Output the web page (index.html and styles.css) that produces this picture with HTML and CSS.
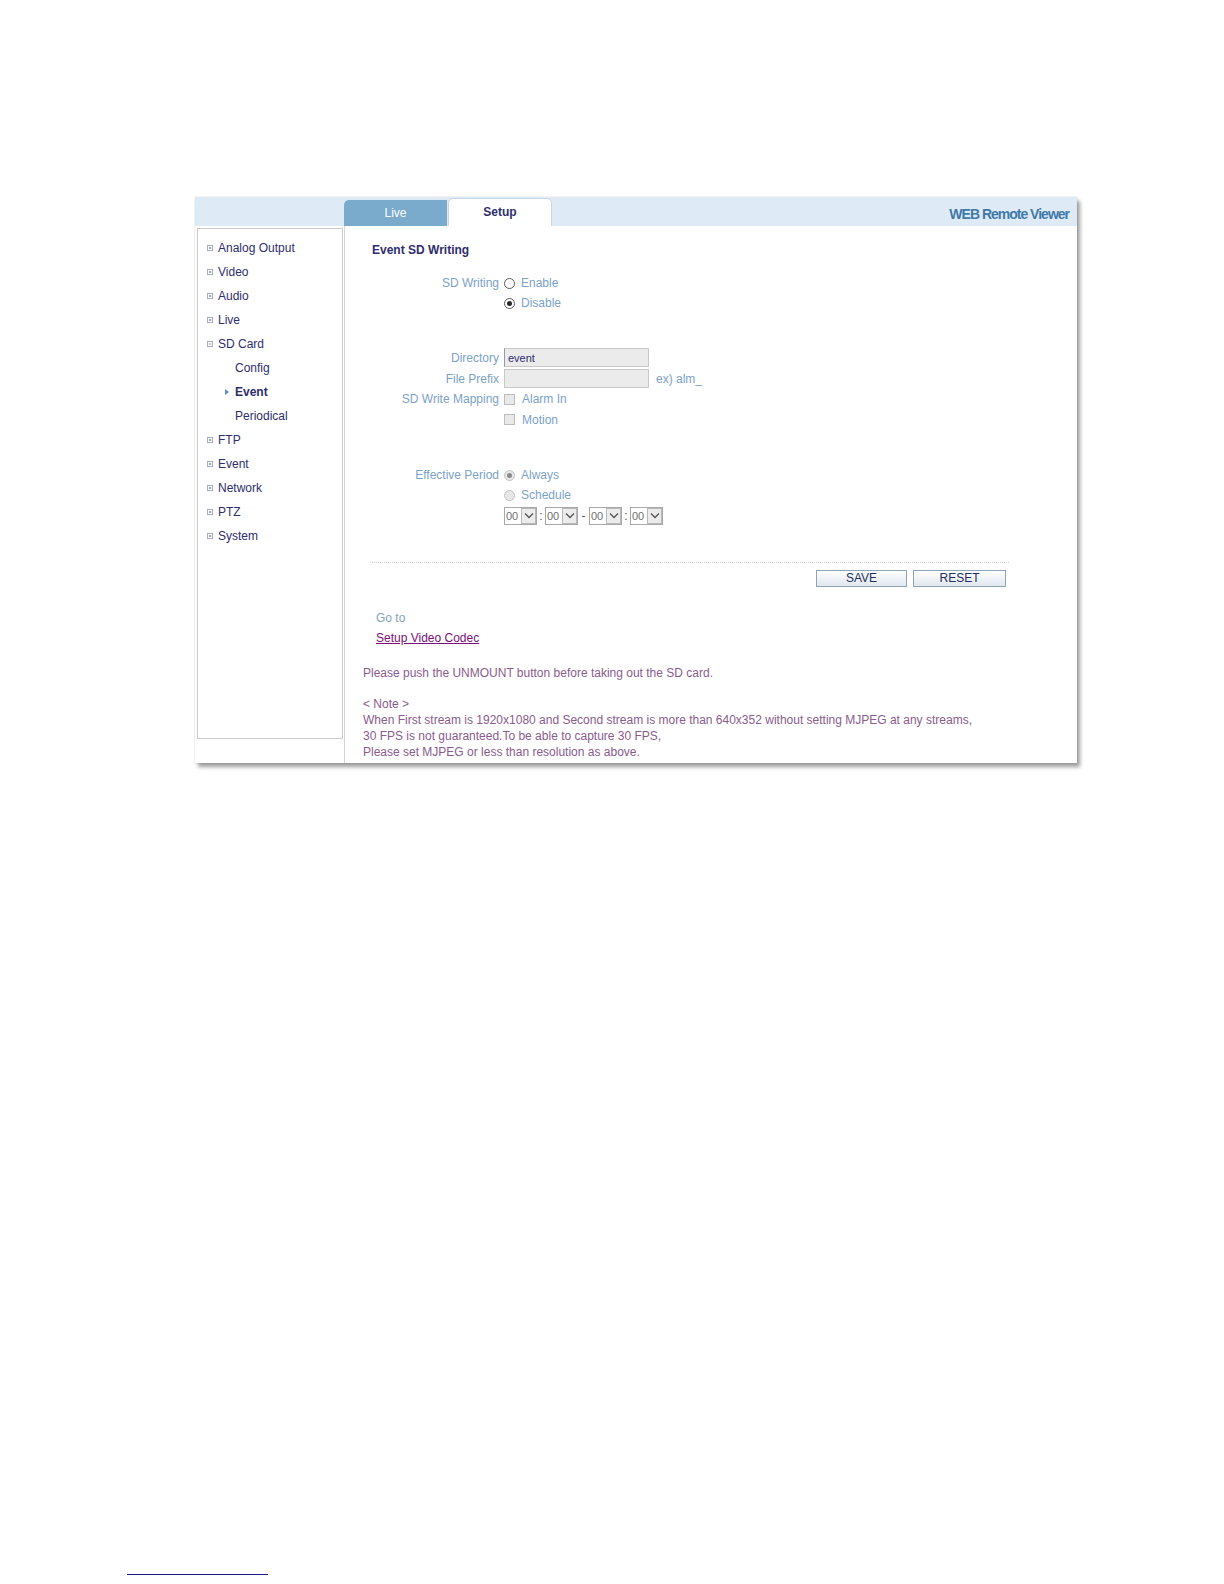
FILE: index.html
```html
<!DOCTYPE html>
<html lang="en">
<head>
<meta charset="utf-8">
<title>WEB Remote Viewer - Event SD Writing</title>
<link rel="stylesheet" href="styles.css">
</head>
<body>
<div class="frame">
  <div class="header">
    <div class="tabs">
      <div class="tab tab-live">Live</div>
      <div class="tab tab-setup">Setup</div>
    </div>
    <div class="brand">WEB Remote Viewer</div>
  </div>
  <div class="content">
    <aside class="side">
      <div class="side-box">
        <ul class="menu">
          <li class="item"><svg class="plus" viewBox="0 0 7 7"><rect x="0.5" y="0.5" width="6" height="6" fill="none" stroke="#9aa8ba"/><path d="M2 3.5h3M3.5 2v3" stroke="#7f8ea3"/></svg>Analog Output</li>
          <li class="item"><svg class="plus" viewBox="0 0 7 7"><rect x="0.5" y="0.5" width="6" height="6" fill="none" stroke="#9aa8ba"/><path d="M2 3.5h3M3.5 2v3" stroke="#7f8ea3"/></svg>Video</li>
          <li class="item"><svg class="plus" viewBox="0 0 7 7"><rect x="0.5" y="0.5" width="6" height="6" fill="none" stroke="#9aa8ba"/><path d="M2 3.5h3M3.5 2v3" stroke="#7f8ea3"/></svg>Audio</li>
          <li class="item"><svg class="plus" viewBox="0 0 7 7"><rect x="0.5" y="0.5" width="6" height="6" fill="none" stroke="#9aa8ba"/><path d="M2 3.5h3M3.5 2v3" stroke="#7f8ea3"/></svg>Live</li>
          <li class="item"><svg class="plus" viewBox="0 0 7 7"><rect x="0.5" y="0.5" width="6" height="6" fill="none" stroke="#9aa8ba"/><path d="M2 3.5h3" stroke="#7f8ea3"/></svg>SD Card</li>
          <li class="sub"><span class="arrow-slot"></span>Config</li>
          <li class="sub active"><span class="arrow-slot"><svg viewBox="0 0 4 6"><path d="M0 0L4 3L0 6Z" fill="#5a8fcb"/></svg></span>Event</li>
          <li class="sub"><span class="arrow-slot"></span>Periodical</li>
          <li class="item"><svg class="plus" viewBox="0 0 7 7"><rect x="0.5" y="0.5" width="6" height="6" fill="none" stroke="#9aa8ba"/><path d="M2 3.5h3M3.5 2v3" stroke="#7f8ea3"/></svg>FTP</li>
          <li class="item"><svg class="plus" viewBox="0 0 7 7"><rect x="0.5" y="0.5" width="6" height="6" fill="none" stroke="#9aa8ba"/><path d="M2 3.5h3M3.5 2v3" stroke="#7f8ea3"/></svg>Event</li>
          <li class="item"><svg class="plus" viewBox="0 0 7 7"><rect x="0.5" y="0.5" width="6" height="6" fill="none" stroke="#9aa8ba"/><path d="M2 3.5h3M3.5 2v3" stroke="#7f8ea3"/></svg>Network</li>
          <li class="item"><svg class="plus" viewBox="0 0 7 7"><rect x="0.5" y="0.5" width="6" height="6" fill="none" stroke="#9aa8ba"/><path d="M2 3.5h3M3.5 2v3" stroke="#7f8ea3"/></svg>PTZ</li>
          <li class="item"><svg class="plus" viewBox="0 0 7 7"><rect x="0.5" y="0.5" width="6" height="6" fill="none" stroke="#9aa8ba"/><path d="M2 3.5h3M3.5 2v3" stroke="#7f8ea3"/></svg>System</li>
        </ul>
      </div>
    </aside>
    <main class="main">
      <h1 class="title">Event SD Writing</h1>

      <div class="section s1">
        <div class="row">
          <span class="lbl">SD Writing</span>
          <span class="radio"></span><span class="val">Enable</span>
        </div>
        <div class="row">
          <span class="lbl"></span>
          <span class="radio checked"></span><span class="val">Disable</span>
        </div>
      </div>

      <div class="section s2">
        <div class="row r21">
          <span class="lbl">Directory</span>
          <input class="field dir" type="text" value="event" readonly>
        </div>
        <div class="row r21">
          <span class="lbl">File Prefix</span>
          <input class="field" type="text" value="" readonly>
          <span class="hint">ex) alm_</span>
        </div>
        <div class="row r20">
          <span class="lbl">SD Write Mapping</span>
          <span class="check"></span><span class="val">Alarm In</span>
        </div>
        <div class="row r21">
          <span class="lbl"></span>
          <span class="check"></span><span class="val">Motion</span>
        </div>
      </div>

      <div class="section s3">
        <div class="row">
          <span class="lbl">Effective Period</span>
          <span class="radio off checked"></span><span class="val">Always</span>
        </div>
        <div class="row">
          <span class="lbl"></span>
          <span class="radio off"></span><span class="val">Schedule</span>
        </div>
        <div class="row r21 times">
          <span class="lbl"></span>
          <span class="sel"><span class="sv">00</span><span class="sb"><svg viewBox="0 0 10 7"><path d="M1 1.5L5 5.5L9 1.5" fill="none" stroke="#555" stroke-width="1.3"/></svg></span></span>
          <span class="sep">:</span>
          <span class="sel"><span class="sv">00</span><span class="sb"><svg viewBox="0 0 10 7"><path d="M1 1.5L5 5.5L9 1.5" fill="none" stroke="#555" stroke-width="1.3"/></svg></span></span>
          <span class="sep dash">-</span>
          <span class="sel"><span class="sv">00</span><span class="sb"><svg viewBox="0 0 10 7"><path d="M1 1.5L5 5.5L9 1.5" fill="none" stroke="#555" stroke-width="1.3"/></svg></span></span>
          <span class="sep">:</span>
          <span class="sel"><span class="sv">00</span><span class="sb"><svg viewBox="0 0 10 7"><path d="M1 1.5L5 5.5L9 1.5" fill="none" stroke="#555" stroke-width="1.3"/></svg></span></span>
        </div>
      </div>

      <div class="actions">
        <button class="btn save" type="button">SAVE</button>
        <button class="btn reset" type="button">RESET</button>
      </div>

      <div class="goto">
        <div class="goto-label">Go to</div>
        <a class="goto-link" href="#">Setup Video Codec</a>
      </div>

      <div class="notes">
        <p>Please push the UNMOUNT button before taking out the SD card.</p>
        <p class="note-block">&lt; Note &gt;<br>When First stream is 1920x1080 and Second stream is more than 640x352 without setting MJPEG at any streams,<br>30 FPS is not guaranteed.To be able to capture 30 FPS,<br>Please set MJPEG or less than resolution as above.</p>
      </div>
    </main>
  </div>
</div>
<div class="footnote-rule"></div>
</body>
</html>
```

FILE: styles.css
```css
html, body {
  margin: 0;
  padding: 0;
  background: #ffffff;
}

body {
  font-family: "Liberation Sans", Arial, sans-serif;
  font-size: 12px;
  color: #2e2d6e;
}

.frame {
  margin: 197px 0 0 195px;
  width: 882px;
  height: 566px;
  background: #ffffff;
  box-shadow: 0 0 1px rgba(0, 0, 0, 0.25), 3px 4px 4px rgba(0, 0, 0, 0.38);
  display: flex;
  flex-direction: column;
}

/* Header */
.header {
  height: 29px;
  background: #deebf7;
  display: flex;
  align-items: flex-end;
  padding-left: 149px;
  flex-shrink: 0;
}

.tabs {
  display: flex;
  align-items: flex-end;
}

.tab {
  box-sizing: border-box;
  text-align: center;
  font-size: 12px;
}

.tab-live {
  width: 103px;
  height: 26px;
  line-height: 26px;
  background: #7aaacc;
  color: #ffffff;
  border-radius: 5px 0 0 0;
  padding-bottom: 1px;
}

.tab-setup {
  width: 104px;
  height: 28px;
  line-height: 27px;
  margin-left: 1px;
  background: #ffffff;
  border: 1px solid #c9d8e6;
  border-bottom: none;
  border-radius: 5px 5px 0 0;
  font-weight: bold;
  color: #2e2d6e;
  padding-bottom: 2px;
}

.brand {
  margin-left: auto;
  align-self: center;
  padding-right: 8px;
  padding-top: 4px;
  font-size: 14px;
  font-weight: bold;
  letter-spacing: -1px;
  color: #3f79a9;
}

/* Body */
.content {
  flex: 1;
  display: flex;
}

.side {
  width: 149px;
  border-right: 1px solid #d6d6d6;
  flex-shrink: 0;
}

.side-box {
  box-sizing: border-box;
  margin: 2px 1px 0 2px;
  height: 511px;
  border: 1px solid #cbcbcb;
}

.menu {
  list-style: none;
  margin: 0;
  padding: 7px 0 0 0;
}

.menu li {
  height: 24px;
  line-height: 24px;
  display: flex;
  align-items: center;
  color: #2e2d6e;
}

.item {
  padding-left: 9px;
}

.plus {
  width: 6px;
  height: 6px;
  margin-right: 5px;
  flex-shrink: 0;
}

.sub {
  padding-left: 27px;
}

.arrow-slot {
  width: 4px;
  height: 6px;
  margin-right: 6px;
  display: inline-flex;
}

.arrow-slot svg {
  width: 4px;
  height: 6px;
}

.sub.active {
  font-weight: bold;
}

/* Main */
.main {
  flex: 1;
  padding-top: 17px;
}

.title {
  margin: 0 0 0 27px;
  font-size: 12px;
  line-height: 14px;
  font-weight: bold;
  color: #2e2d6e;
}

.section {
  padding-left: 27px;
}

.s1 { margin-top: 16px; }
.s2 { margin-top: 34px; }
.s3 { margin-top: 35px; }

.row {
  display: flex;
  align-items: center;
  height: 20px;
  color: #7ba2c9;
}

.row.r21 {
  height: 21px;
}

.row.r20 {
  height: 20px;
}

.lbl {
  width: 127px;
  margin-right: 5px;
  text-align: right;
  flex-shrink: 0;
}

.val {
  color: #7ba2c9;
}

.radio {
  box-sizing: border-box;
  width: 11px;
  height: 11px;
  margin-right: 6px;
  border-radius: 50%;
  border: 1px solid #5a5a5a;
  background: #ffffff;
  display: inline-flex;
  align-items: center;
  justify-content: center;
}

.radio.checked::after {
  content: "";
  width: 5px;
  height: 5px;
  border-radius: 50%;
  background: #2b2b2b;
}

.radio.off {
  border-color: #c4c4c4;
  background: #e7e7e7;
}

.radio.off.checked::after {
  background: #8a8a8a;
}

.check {
  box-sizing: border-box;
  width: 11px;
  height: 11px;
  margin-right: 7px;
  border: 1px solid #bdbdbd;
  background: #e9e9e9;
}

.field {
  box-sizing: border-box;
  width: 145px;
  height: 19px;
  margin: 0;
  padding: 0 3px;
  border: 1px solid #c9c9c9;
  background: #ebebeb;
  font-family: "Liberation Sans", Arial, sans-serif;
  font-size: 11px;
  color: #2e2d6e;
  outline: none;
}

.field.dir {
  border-left-color: #8e9ab0;
}

.hint {
  margin-left: 7px;
  color: #7ba2c9;
}

/* Time selects */
.times .sel {
  box-sizing: border-box;
  width: 33px;
  height: 18px;
  border: 1px solid #a9a9a9;
  background: #ffffff;
  display: inline-flex;
  align-items: stretch;
}

.sv {
  flex: 1;
  font-size: 11px;
  line-height: 16px;
  padding-left: 1px;
  color: #6e6e6e;
}

.sb {
  box-sizing: border-box;
  width: 15px;
  border: 1px solid #b8b8b8;
  background: #ececec;
  display: inline-flex;
  align-items: center;
  justify-content: center;
}

.sb svg {
  width: 10px;
  height: 7px;
}

.sep {
  width: 8px;
  text-align: center;
  color: #555555;
}

.sep.dash {
  width: 11px;
}

/* Actions */
.actions {
  margin: 36px 0 0 27px;
  width: 637px;
  border-top: 1px dotted #cfcfcf;
  padding: 7px 3px 0 0;
  box-sizing: border-box;
  display: flex;
  justify-content: flex-end;
  gap: 6px;
}

.btn {
  box-sizing: border-box;
  height: 17px;
  margin: 0;
  padding: 0;
  border: 1px solid #8ea2b8;
  background: linear-gradient(#ffffff, #dfe7ef);
  font-family: "Liberation Sans", Arial, sans-serif;
  font-size: 12px;
  line-height: 15px;
  color: #1f2f5f;
}

.btn.save { width: 91px; }
.btn.reset { width: 93px; }

/* Go to */
.goto {
  margin: 21px 0 0 31px;
  line-height: 20px;
}

.goto-label {
  color: #84a3bd;
}

.goto-link {
  color: #7a0f7a;
  text-decoration: underline;
}

/* Notes */
.notes {
  margin: 17px 0 0 18px;
  color: #8a5c8e;
  line-height: 16px;
}

.notes p {
  margin: 0;
}

.notes .note-block {
  margin-top: 15px;
}

.footnote-rule {
  margin: 811px 0 0 127px;
  width: 141px;
  height: 1px;
  background: #1d1d8c;
}
```
